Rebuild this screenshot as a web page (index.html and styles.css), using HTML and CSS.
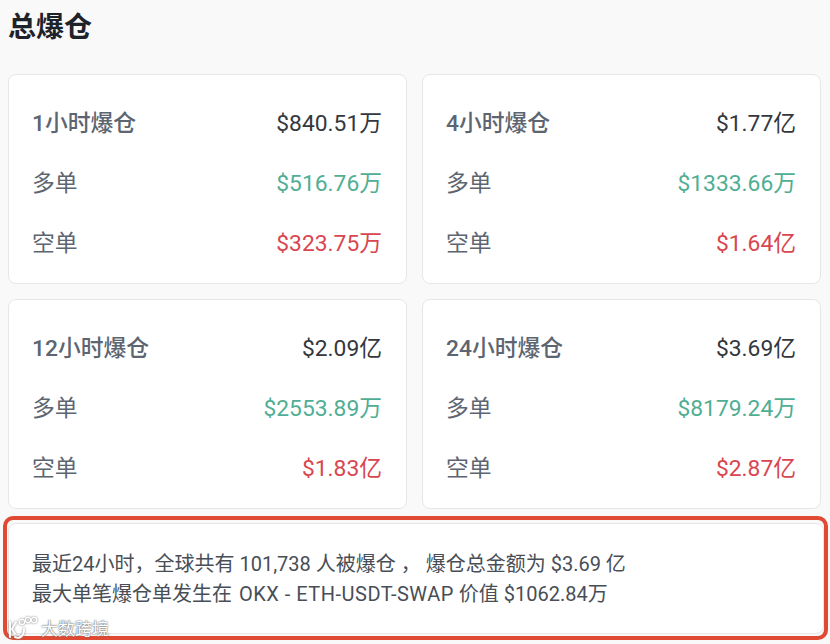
FILE: index.html
```html
<!DOCTYPE html>
<html lang="zh-CN">
<head>
<meta charset="utf-8">
<title>总爆仓</title>
<link rel="stylesheet" href="styles.css">
</head>
<body>
<h1 class="title">总爆仓</h1>
<main class="grid">
  <section class="card">
    <div class="row head"><span>1小时爆仓</span><span class="total">$840.51万</span></div>
    <div class="row"><span>多单</span><span class="up">$516.76万</span></div>
    <div class="row"><span>空单</span><span class="down">$323.75万</span></div>
  </section>
  <section class="card">
    <div class="row head"><span>4小时爆仓</span><span class="total">$1.77亿</span></div>
    <div class="row"><span>多单</span><span class="up">$1333.66万</span></div>
    <div class="row"><span>空单</span><span class="down">$1.64亿</span></div>
  </section>
  <section class="card">
    <div class="row head"><span>12小时爆仓</span><span class="total">$2.09亿</span></div>
    <div class="row"><span>多单</span><span class="up">$2553.89万</span></div>
    <div class="row"><span>空单</span><span class="down">$1.83亿</span></div>
  </section>
  <section class="card">
    <div class="row head"><span>24小时爆仓</span><span class="total">$3.69亿</span></div>
    <div class="row"><span>多单</span><span class="up">$8179.24万</span></div>
    <div class="row"><span>空单</span><span class="down">$2.87亿</span></div>
  </section>
</main>
<div class="highlight">
  <section class="summary">
    <p>最近24小时，全球共有 101,738 人被爆仓 ， 爆仓总金额为 $3.69 亿</p>
    <p>最大单笔爆仓单发生在 <span class="latin">OKX - ETH-USDT-SWAP</span> 价值 $1062.84万</p>
  </section>
</div>
<div class="watermark">
  <svg class="mark" width="30" height="24" viewBox="0 0 30 24" fill="none" stroke="#fff" stroke-width="2" stroke-linecap="round">
    <path d="M2 6v15"/>
    <path d="M8 6 4 13l3 5"/>
    <path d="M7 21c5 2 9-1 9-8"/>
    <circle cx="14" cy="6" r="2.6" stroke-width="1.2"/>
    <circle cx="20" cy="4" r="2.6" stroke-width="1.2"/>
    <circle cx="26" cy="4" r="2.6" stroke-width="1.2"/>
  </svg>
  <span>大数跨境</span>
</div>
</body>
</html>
```
FILE: styles.css
```css
* { box-sizing: border-box; }
html, body { margin: 0; padding: 0; }
body {
  position: relative;
  width: 830px;
  height: 644px;
  overflow: hidden;
  background: #f9f9f9;
  padding: 9px 8px 0;
  font-family: Roboto, "Noto Sans CJK SC", sans-serif;
  color: #5c6570;
}
.title {
  margin: 0;
  height: 38px;
  line-height: 38px;
  font-size: 28px;
  font-weight: 700;
  color: #1e2329;
}
.grid {
  margin-top: 27px;
  display: grid;
  grid-template-columns: 399px 399px;
  grid-auto-rows: 210px;
  gap: 15px 15px;
}
.card {
  background: #fff;
  border: 1px solid #e6e7e8;
  border-radius: 8px;
  padding: 17px 24px 12px 23px;
  display: flex;
  flex-direction: column;
}
.row {
  flex: 1;
  display: flex;
  justify-content: space-between;
  align-items: center;
  font-size: 22.8px;
}
.head span:first-child { font-weight: 500; }
.total { color: #33383e; }
.up { color: #4fae93; }
.down { color: #d9464f; }
.highlight {
  position: absolute;
  left: 3px;
  top: 516px;
  width: 825px;
  height: 124px;
  border: 4px solid #e04a33;
  border-radius: 10px;
  padding: 3px 0 2px 1px;
}
.summary {
  height: 100%;
  background: #fff;
  border: 1px solid #e6e7e8;
  border-radius: 8px;
  padding: 25px 24px 0 23px;
}
.summary p {
  margin: 0;
  font-size: 20px;
  line-height: 30px;
  color: #484e56;
  white-space: nowrap;
}
.latin {
  margin-left: 2px;
  letter-spacing: .5px;
}
.watermark {
  position: absolute;
  left: 8px;
  top: 615px;
  display: flex;
  align-items: center;
  gap: 3px;
  color: #fff;
  font-size: 17px;
  text-shadow: 0 0 2px #666, 0 0 1px #666;
}
.mark { filter: drop-shadow(0 0 1px #777); }
```
